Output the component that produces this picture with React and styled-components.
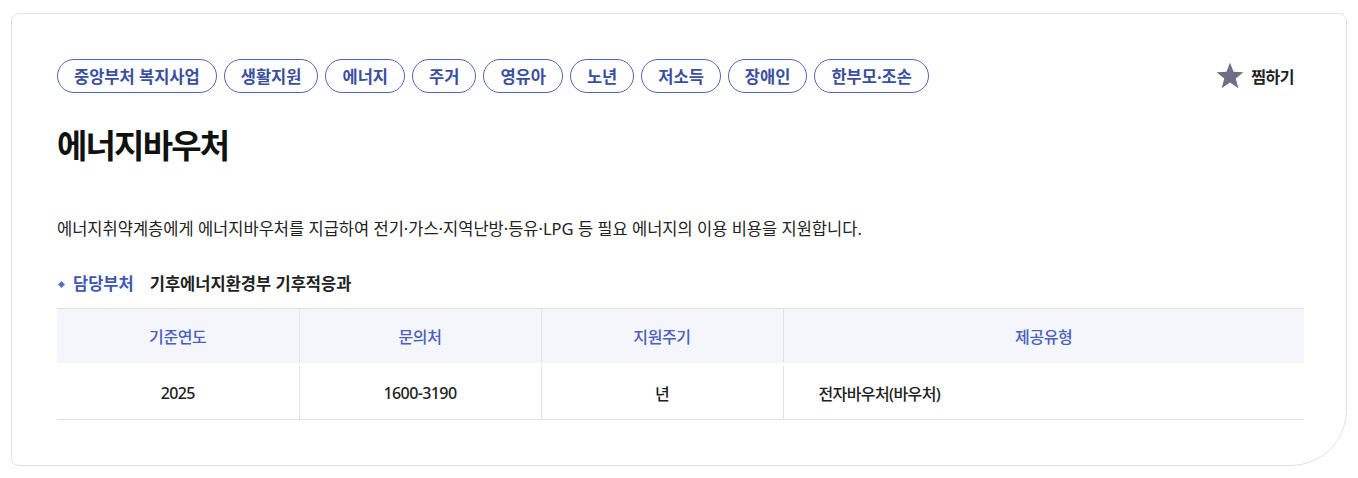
import React from 'react';
import styled, { createGlobalStyle } from 'styled-components';

const GlobalStyle = createGlobalStyle`
  body {
    margin: 0;
    background: #fff;
    font-family: "Noto Sans", "Noto Sans CJK KR", sans-serif;
  }
`;

const Page = styled.div`
  padding: 13px 11px;
`;

const Card = styled.section`
  box-sizing: border-box;
  width: 1336px;
  min-height: 452px;
  padding: 45px 44px 45px 45px;
  border: 1px solid #e1e1e1;
  border-radius: 8px 8px 56px 8px;
  background: #fff;
`;

const TopRow = styled.div`
  display: flex;
  align-items: center;
  justify-content: space-between;
`;

const Tags = styled.div`
  display: flex;
  gap: 7px;
`;

const Tag = styled.span`
  display: inline-flex;
  align-items: center;
  height: 34px;
  box-sizing: border-box;
  padding: 0 16px;
  border: 1px solid #4f66b7;
  border-radius: 17px;
  color: #3a4f9f;
  font-size: 16.5px;
  font-weight: 700;
  white-space: nowrap;
`;

const Wish = styled.button`
  display: flex;
  align-items: center;
  gap: 6px;
  margin-right: 8px;
  padding: 0;
  border: 0;
  background: none;
  font: inherit;
  font-size: 16px;
  font-weight: 700;
  color: #222;
  letter-spacing: -0.5px;
  cursor: pointer;
`;

const Title = styled.h1`
  margin: 33px 0 0;
  font-size: 33px;
  line-height: 40px;
  font-weight: 700;
  color: #111;
  letter-spacing: -1.8px;
`;

const Desc = styled.p`
  margin: 51px 0 0;
  font-size: 16.5px;
  line-height: 24px;
  color: #222;
`;

const Dept = styled.div`
  display: flex;
  align-items: center;
  margin-top: 31px;
  font-size: 16.5px;
  line-height: 24px;
  font-weight: 700;
`;

const Bullet = styled.span`
  width: 5px;
  height: 5px;
  margin: 0 9px 0 2px;
  background: #5a70c8;
  transform: rotate(45deg);
`;

const DeptLabel = styled.span`
  color: #3f58b5;
  margin-right: 16px;
`;

const DeptValue = styled.span`
  color: #222;
`;

const Table = styled.table`
  width: 1247px;
  margin-top: 12px;
  border-collapse: collapse;
  table-layout: fixed;
  border-top: 1px solid #dedede;
`;

const Th = styled.th`
  height: 52px;
  background: #f4f6fb;
  color: #4a5fc0;
  font-size: 16px;
  font-weight: 500;
  letter-spacing: -0.4px;
  border-bottom: 2px solid #e0e0e0;
  border-left: 1px solid #e3e3e3;
  &:first-child {
    border-left: 0;
  }
`;

const Td = styled.td`
  height: 53px;
  padding: ${(p) => (p.$left ? '0 35px' : '0')};
  text-align: ${(p) => (p.$left ? 'left' : 'center')};
  color: #222;
  font-size: 16px;
  font-weight: 500;
  letter-spacing: -0.6px;
  border-top: 3px solid #fff;
  border-bottom: 1px solid #e0e0e0;
  border-left: 1px solid #e3e3e3;
  &:first-child {
    border-left: 0;
  }
`;

const tags = ['중앙부처 복지사업', '생활지원', '에너지', '주거', '영유아', '노년', '저소득', '장애인', '한부모·조손'];

const Star = () => (
  <svg width="30" height="28" viewBox="0 0 24 23">
    <polygon
      points="12,0.5 14.9,8 23,8.4 16.7,13.5 18.9,21.5 12,16.9 5.1,21.5 7.3,13.5 1,8.4 9.1,8"
      fill="#6d6f86"
    />
  </svg>
);

export default function App() {
  return (
    <Page>
      <GlobalStyle />
      <Card>
        <TopRow>
          <Tags>
            {tags.map((t) => (
              <Tag key={t}>{t}</Tag>
            ))}
          </Tags>
          <Wish>
            <Star />
            찜하기
          </Wish>
        </TopRow>
        <Title>에너지바우처</Title>
        <Desc>
          에너지취약계층에게 에너지바우처를 지급하여 전기·가스·지역난방·등유·LPG 등 필요 에너지의 이용 비용을 지원합니다.
        </Desc>
        <Dept>
          <Bullet />
          <DeptLabel>담당부처</DeptLabel>
          <DeptValue>기후에너지환경부 기후적응과</DeptValue>
        </Dept>
        <Table>
          <colgroup>
            <col style={{ width: 242 }} />
            <col style={{ width: 242 }} />
            <col style={{ width: 242 }} />
            <col />
          </colgroup>
          <thead>
            <tr>
              <Th>기준연도</Th>
              <Th>문의처</Th>
              <Th>지원주기</Th>
              <Th>제공유형</Th>
            </tr>
          </thead>
          <tbody>
            <tr>
              <Td>2025</Td>
              <Td>1600-3190</Td>
              <Td>년</Td>
              <Td $left>전자바우처(바우처)</Td>
            </tr>
          </tbody>
        </Table>
      </Card>
    </Page>
  );
}
